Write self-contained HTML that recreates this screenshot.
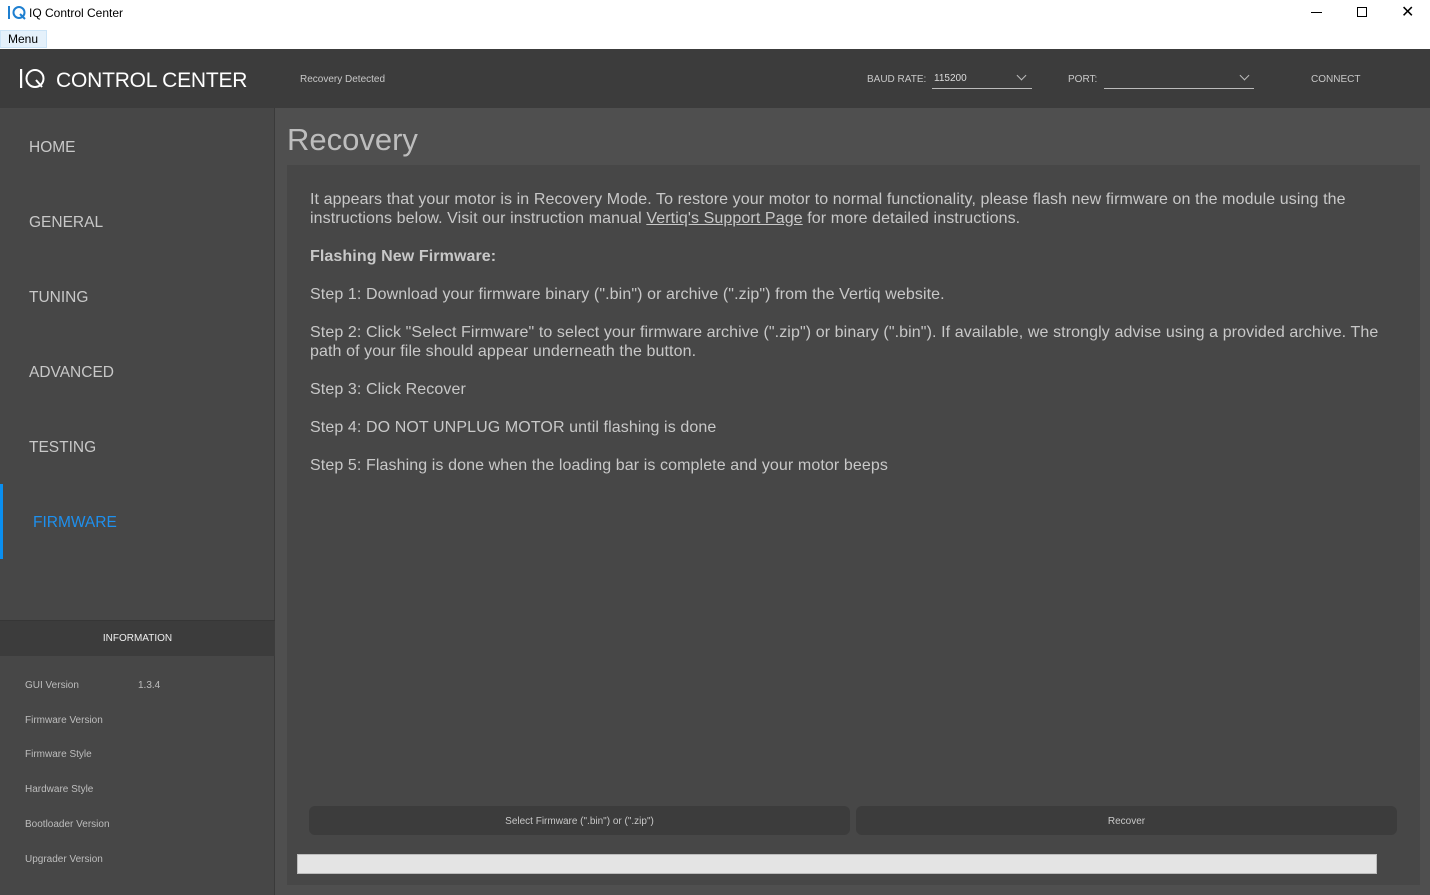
<!DOCTYPE html>
<html><head><meta charset="utf-8"><style>
*{margin:0;padding:0;box-sizing:border-box}
body{width:1430px;height:895px;overflow:hidden;background:#4f4f4f;font-family:"Liberation Sans",sans-serif;position:relative}
.abs{position:absolute}
.title{left:0;top:0;width:1430px;height:30px;background:#fff}
.menubar{left:0;top:30px;width:1430px;height:19px;background:#fff}
.header{left:0;top:49px;width:1430px;height:59px;background:#3c3c3c}
.side{left:0;top:108px;width:275px;height:787px;background:#474747;border-right:1px solid #3a3a3a}
.nav{position:absolute;left:29px;font-size:15.5px;color:#c8c8c8}
.info{left:0;top:620px;width:275px;height:36px;background:#3c3c3c;color:#eee;font-size:10px;text-align:center;line-height:36px;border-top:1px solid #363636}
.il{position:absolute;left:25px;font-size:10px;color:#bdbdbd}
.panel{left:287px;top:165px;width:1133px;height:720px;background:#474747}
.p{position:absolute;left:310px;font-size:16px;color:#c8c8c8;line-height:19px;width:1085px;letter-spacing:0.1px}
.btn{position:absolute;top:806px;height:29px;background:#3c3c3c;border-radius:6px;color:#c8c8c8;font-size:10px;text-align:center;line-height:31px}
</style></head><body>
<div class="abs title">
 <svg class="abs" style="left:8px;top:5px" width="18" height="16" viewBox="0 0 18 16"><rect x="0" y="1" width="2" height="13" fill="#1e7fd0"/><circle cx="11" cy="7.5" r="5.5" fill="none" stroke="#1e7fd0" stroke-width="2"/><path d="M12 9 L17 14" stroke="#1e7fd0" stroke-width="2"/></svg>
 <div class="abs" style="left:29px;top:6px;font-size:12px;color:#000">IQ Control Center</div>
 <div class="abs" style="left:1311px;top:12px;width:11px;height:1px;background:#000"></div>
 <div class="abs" style="left:1357px;top:7px;width:10px;height:10px;border:1px solid #000"></div>
 <div class="abs" style="left:1401px;top:2px;font-size:16px;color:#000">✕</div>
</div>
<div class="abs menubar"><div class="abs" style="left:0;top:0;width:47px;height:18px;background:#e5f1fb;border:1px solid #cce4f7;font-size:12px;line-height:17px;padding-left:7px;color:#000">Menu</div></div>
<div class="abs header">
 <svg class="abs" style="left:20px;top:19px" width="30" height="22" viewBox="0 0 30 22"><rect x="0" y="1" width="2.2" height="19" fill="#fff"/><circle cx="15" cy="10.5" r="8.5" fill="none" stroke="#fff" stroke-width="2"/><path d="M16 12 L22 19" stroke="#fff" stroke-width="2"/></svg>
 <div class="abs" style="left:56px;top:20px;font-size:21px;color:#fff;letter-spacing:-0.2px">CONTROL CENTER</div>
 <div class="abs" style="left:300px;top:25px;font-size:10px;color:#c8c8c8">Recovery Detected</div>
 <div class="abs" style="left:867px;top:25px;font-size:10px;color:#c8c8c8">BAUD RATE:</div>
 <div class="abs" style="left:932px;top:24px;width:100px;height:16px;border-bottom:1px solid #bbb;font-size:10px;color:#ddd;padding-left:2px">115200</div>
 <div class="abs" style="left:1018px;top:23px;width:7px;height:7px;border-right:1px solid #bbb;border-bottom:1px solid #bbb;transform:rotate(45deg)"></div>
 <div class="abs" style="left:1068px;top:25px;font-size:10px;color:#c8c8c8">PORT:</div>
 <div class="abs" style="left:1104px;top:23px;width:150px;height:17px;border-bottom:1px solid #bbb"></div>
 <div class="abs" style="left:1241px;top:23px;width:7px;height:7px;border-right:1px solid #bbb;border-bottom:1px solid #bbb;transform:rotate(45deg)"></div>
 <div class="abs" style="left:1311px;top:25px;font-size:10px;color:#c8c8c8">CONNECT</div>
</div>
<div class="abs side">
 <div class="nav" style="top:31px">HOME</div>
 <div class="nav" style="top:106px">GENERAL</div>
 <div class="nav" style="top:181px">TUNING</div>
 <div class="nav" style="top:256px">ADVANCED</div>
 <div class="nav" style="top:331px">TESTING</div>
 <div class="abs" style="left:0;top:376px;width:3px;height:75px;background:#0a8ff0"></div>
 <div class="nav" style="top:406px;left:33px;color:#1e90ee">FIRMWARE</div>
</div>
<div class="abs info">INFORMATION</div>
<div class="il" style="top:680px">GUI Version</div><div class="il" style="top:680px;left:138px">1.3.4</div>
<div class="il" style="top:715px">Firmware Version</div>
<div class="il" style="top:749px">Firmware Style</div>
<div class="il" style="top:784px">Hardware Style</div>
<div class="il" style="top:819px">Bootloader Version</div>
<div class="il" style="top:854px">Upgrader Version</div>
<div class="abs" style="left:287px;top:122px;font-size:31px;color:#bdbdbd">Recovery</div>
<div class="abs panel"></div>
<div class="p" style="top:190px">It appears that your motor is in Recovery Mode. To restore your motor to normal functionality, please flash new firmware on the module using the instructions below. Visit our instruction manual <u>Vertiq's Support Page</u> for more detailed instructions.</div>
<div class="p" style="top:247px;font-weight:bold">Flashing New Firmware:</div>
<div class="p" style="top:285px">Step 1: Download your firmware binary (".bin") or archive (".zip") from the Vertiq website.</div>
<div class="p" style="top:323px">Step 2: Click "Select Firmware" to select your firmware archive (".zip") or binary (".bin"). If available, we strongly advise using a provided archive. The path of your file should appear underneath the button.</div>
<div class="p" style="top:380px">Step 3: Click Recover</div>
<div class="p" style="top:418px">Step 4: DO NOT UNPLUG MOTOR until flashing is done</div>
<div class="p" style="top:456px">Step 5: Flashing is done when the loading bar is complete and your motor beeps</div>
<div class="btn" style="left:309px;width:541px">Select Firmware (".bin") or (".zip")</div>
<div class="btn" style="left:856px;width:541px">Recover</div>
<div class="abs" style="left:297px;top:854px;width:1080px;height:20px;background:#e4e4e4;border:1px solid #bcbcbc"></div>
</body></html>
